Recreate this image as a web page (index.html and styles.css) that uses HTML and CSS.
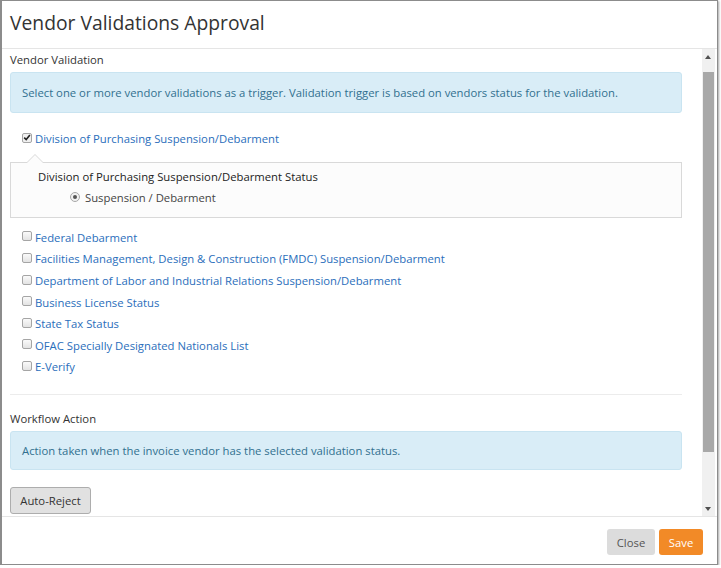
FILE: index.html
```html
<!DOCTYPE html>
<html>
<head>
<meta charset="utf-8">
<link rel="stylesheet" href="styles.css">
</head>
<body>
<div class="modal">
  <div class="modal-header">
    <h1 class="modal-title">Vendor Validations Approval</h1>
  </div>
  <div class="modal-body-wrap">
    <div class="modal-body">
      <div class="section-label">Vendor Validation</div>
      <div class="alert">Select one or more vendor validations as a trigger. Validation trigger is based on vendors status for the validation.</div>

      <div class="check-row first">
        <span class="cb checked"><svg viewBox="0 0 10 10" width="9" height="9"><path d="M1.5 5.2 L4 7.6 L8.6 2" fill="none" stroke="#222" stroke-width="2"/></svg></span>
        <span class="check-label">Division of Purchasing Suspension/Debarment</span>
      </div>
      <div class="sub-panel">
        <div class="sub-title">Division of Purchasing Suspension/Debarment Status</div>
        <div class="radio-row"><span class="radio"><span class="dot"></span></span><span>Suspension / Debarment</span></div>
      </div>

      <div class="check-list">
        <div class="check-row"><span class="cb"></span><span class="check-label">Federal Debarment</span></div>
        <div class="check-row"><span class="cb"></span><span class="check-label">Facilities Management, Design &amp; Construction (FMDC) Suspension/Debarment</span></div>
        <div class="check-row"><span class="cb"></span><span class="check-label">Department of Labor and Industrial Relations Suspension/Debarment</span></div>
        <div class="check-row"><span class="cb"></span><span class="check-label">Business License Status</span></div>
        <div class="check-row"><span class="cb"></span><span class="check-label">State Tax Status</span></div>
        <div class="check-row"><span class="cb"></span><span class="check-label">OFAC Specially Designated Nationals List</span></div>
        <div class="check-row"><span class="cb"></span><span class="check-label">E-Verify</span></div>
      </div>

      <hr class="divider">

      <div class="section-label second">Workflow Action</div>
      <div class="alert short">Action taken when the invoice vendor has the selected validation status.</div>
      <button class="btn-default">Auto-Reject</button>
    </div>
    <div class="scrollbar">
      <div class="arrow up"></div>
      <div class="track"><div class="thumb"></div></div>
      <div class="arrow down"></div>
    </div>
  </div>
  <div class="modal-footer">
    <button class="btn btn-close">Close</button>
    <button class="btn btn-save">Save</button>
  </div>
</div>
</body>
</html>
```
FILE: styles.css
```css
* { box-sizing: border-box; }
html, body { margin: 0; padding: 0; background: #fff; }
body { font-family: "Open Sans", "Liberation Sans", sans-serif; color: #333; font-size: 11.3px; }

.modal {
  width: 718px;
  height: 565px;
  border: 1px solid #8c8c8c;
  border-left-width: 2px;
  box-shadow: 1px 1px 2px rgba(0,0,0,0.35);
  display: flex;
  flex-direction: column;
  background: #fff;
}

.modal-header {
  height: 48px;
  border-bottom: 1px solid #e5e5e5;
  padding: 8px 8px 0 8px;
}
.modal-title {
  margin: 0;
  font-size: 19.3px;
  font-weight: 400;
  line-height: 28px;
  color: #333;
}

.modal-body-wrap {
  height: 468px;
  display: flex;
  border-bottom: 1px solid #e5e5e5;
}
.modal-body {
  flex: 1;
  overflow: hidden;
  padding: 2px 20px 0 8px;
}

.section-label {
  line-height: 18px;
  color: #333;
  margin-bottom: 3px;
}
.section-label.second { margin-top: 15px; }

.alert {
  background: #d9edf7;
  border: 1px solid #c9e4f1;
  border-radius: 3px;
  color: #31708f;
  padding: 11px 11px;
  line-height: 17px;
}
.alert.short { padding: 10px 11px; }

.check-row {
  display: flex;
  align-items: center;
  height: 21.6px;
  padding-left: 12px;
}
.check-row.first { margin-top: 15px; }
.check-list { margin-top: 9px; }

.cb {
  width: 10px;
  height: 10px;
  border: 1px solid #a5a5a5;
  border-radius: 2px;
  background: linear-gradient(#fafafa, #e3e3e3);
  margin-right: 3px;
  display: inline-flex;
  align-items: center;
  justify-content: center;
  flex: none;
  position: relative;
  top: -1px;
}
.cb.checked { background: #f0f0f0; }
.check-label { color: #2a6ebb; }

.sub-panel {
  position: relative;
  margin-top: 12px;
  border: 1px solid #d9d9d9;
  background: #fcfcfc;
  padding: 5px 10px 10px 27px;
}
.sub-panel::before {
  content: "";
  position: absolute;
  top: -9px;
  left: 15px;
  width: 0; height: 0;
  border-left: 9px solid transparent;
  border-right: 9px solid transparent;
  border-bottom: 9px solid #d9d9d9;
}
.sub-panel::after {
  content: "";
  position: absolute;
  top: -8px;
  left: 16px;
  width: 0; height: 0;
  border-left: 8px solid transparent;
  border-right: 8px solid transparent;
  border-bottom: 8px solid #fcfcfc;
}
.sub-title { line-height: 18px; color: #222; }
.radio-row {
  display: flex;
  align-items: center;
  padding-left: 32px;
  margin-top: 3px;
  line-height: 18px;
  color: #444;
}
.radio {
  width: 10px; height: 10px;
  border: 1px solid #a8a8a8;
  border-radius: 50%;
  background: #f2f2f2;
  display: inline-flex;
  align-items: center;
  justify-content: center;
  margin-right: 5px;
  position: relative;
  top: -1px;
}
.radio .dot { width: 4px; height: 4px; border-radius: 50%; background: #555; }

.divider {
  border: 0;
  border-top: 1px solid #ececec;
  margin: 16px 0 0 0;
}

.btn-default {
  margin-top: 17px;
  font-family: inherit;
  font-size: 11.3px;
  color: #333;
  background: #e1e1e1;
  border: 1px solid #adadad;
  border-radius: 3px;
  height: 27px;
  width: 81px;
  padding: 0;
}

.scrollbar {
  width: 13px;
  margin-right: 2px;
  background: #f0f0f0;
  display: flex;
  flex-direction: column;
}
.arrow { height: 18px; position: relative; }
.arrow::after {
  content: "";
  position: absolute;
  left: 3px;
  width: 0; height: 0;
  border-left: 3.5px solid transparent;
  border-right: 3.5px solid transparent;
}
.arrow.up::after { top: 6px; border-bottom: 4px solid #505050; }
.arrow.down::after { bottom: 5px; border-top: 4px solid #505050; }
.track { flex: 1; padding: 5px 1px 0 1px; }
.thumb { height: 380px; background: #a8a8a8; }

.modal-footer {
  flex: 1;
  display: flex;
  justify-content: flex-end;
  align-items: flex-start;
  gap: 4px;
  padding: 12px 14px 0 0;
}
.btn {
  font-family: inherit;
  font-size: 11.3px;
  height: 26px;
  border: 0;
  border-radius: 3px;
  padding: 0;
}
.btn-close { width: 48px; background: #dcdcdc; color: #555; }
.btn-save { width: 44px; background: #f28a27; color: #fff; }
```
